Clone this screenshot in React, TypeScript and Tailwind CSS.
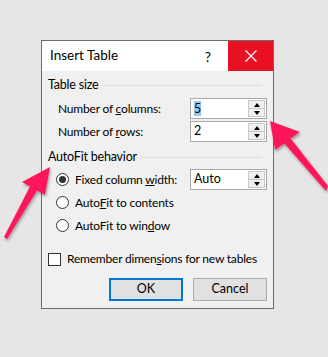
import React from "react";

const font = { fontFamily: 'Lato, "Noto Sans", Arial, sans-serif' };

function Spin() {
  return (
    <div className="absolute right-[1px] top-[1px] bottom-[1px] w-[17px] flex flex-col border border-[#c8c8c8] bg-[#f0f0f0]">
      <div className="flex-1 flex items-center justify-center border-b border-[#c8c8c8]">
        <div className="w-0 h-0 border-l-[3.5px] border-r-[3.5px] border-b-[4px] border-l-transparent border-r-transparent border-b-black" />
      </div>
      <div className="flex-1 flex items-center justify-center">
        <div className="w-0 h-0 border-l-[3.5px] border-r-[3.5px] border-t-[4px] border-l-transparent border-r-transparent border-t-black" />
      </div>
    </div>
  );
}

function SpinInput({ children }: { children: React.ReactNode }) {
  return (
    <div className="relative w-[77px] h-[21px] border border-[#a8a8a8] bg-white flex items-center pl-[3px] text-[12.5px] text-black">
      {children}
      <Spin />
    </div>
  );
}

function Radio({ checked }: { checked?: boolean }) {
  return (
    <div className="w-[13px] h-[13px] rounded-full border border-[#333] bg-white flex items-center justify-center shrink-0">
      {checked && <div className="w-[7px] h-[7px] rounded-full bg-[#333]" />}
    </div>
  );
}

function GroupHeader({ label }: { label: string }) {
  return (
    <div className="flex items-center h-[14px] text-[12.5px] tracking-[-0.2px] text-black whitespace-nowrap">
      <span>{label}</span>
      <div className="flex-1 h-px bg-[#dcdcdc] ml-[5px] mr-[5px]" />
    </div>
  );
}

const txt = "text-[12px] tracking-[-0.2px] text-black";

export default function App() {
  return (
    <div className="relative w-[328px] h-[357px] bg-[#e6e6e6] overflow-hidden" style={font}>
      <div className="pt-[40px] pl-[41px]">
        <div className="w-[233px] h-[269px] border border-[#6d6d6d] bg-[#f0f0f0] flex flex-col">
          <div className="h-[30px] bg-white flex items-center">
            <span className="ml-[8px] text-[13.5px] text-black leading-none flex-1">Insert Table</span>
            <span className="w-[40px] text-center text-[14px] text-black">?</span>
            <div className="w-[45px] h-[30px] bg-[#e81123] flex items-center justify-center">
              <svg width="12" height="12" viewBox="0 0 12 12">
                <path d="M0.5 0.5 L11.5 11.5 M11.5 0.5 L0.5 11.5" stroke="white" strokeWidth="1.2" />
              </svg>
            </div>
          </div>
          <div className="flex flex-col pl-[6px] pr-[6px] whitespace-nowrap">
            <div className="mt-[7px]">
              <GroupHeader label="Table size" />
            </div>
            <div className="mt-[6px] flex items-center justify-between h-[21px]">
              <span className={`ml-[10px] ${txt}`}>
                Number of <u>c</u>olumns:
              </span>
              <SpinInput>
                <span className="bg-[#99c9ef] leading-[15px]">5</span>
              </SpinInput>
            </div>
            <div className="mt-[2px] flex items-center justify-between h-[21px]">
              <span className={`ml-[10px] ${txt}`}>
                Number of <u>r</u>ows:
              </span>
              <SpinInput>2</SpinInput>
            </div>
            <div className="mt-[8px]">
              <GroupHeader label="AutoFit behavior" />
            </div>
            <div className="mt-[4px] flex items-center justify-between h-[23px]">
              <div className={`flex items-center ml-[8px] gap-[6px] ${txt}`}>
                <Radio checked />
                <span>
                  Fixed column <u>w</u>idth:
                </span>
              </div>
              <SpinInput>Auto</SpinInput>
            </div>
            <div className={`flex items-center h-[23px] ml-[8px] gap-[6px] ${txt}`}>
              <Radio />
              <span>
                Auto<u>F</u>it to contents
              </span>
            </div>
            <div className={`flex items-center h-[23px] ml-[8px] gap-[6px] ${txt}`}>
              <Radio />
              <span>
                AutoFit to win<u>d</u>ow
              </span>
            </div>
            <div className={`mt-[15px] flex items-center h-[14px] gap-[6px] ${txt}`}>
              <div className="w-[13px] h-[13px] border border-[#333] bg-white shrink-0" />
              <span>
                Remember dimen<u>s</u>ions for new tables
              </span>
            </div>
            <div className="mt-[12px] flex justify-end gap-[10px]">
              <div className="w-[74px] h-[23px] border-2 border-[#0078d7] bg-[#e1e1e1] flex items-center justify-center text-[12.5px] text-black">
                OK
              </div>
              <div className="w-[74px] h-[23px] border border-[#adadad] bg-[#e1e1e1] flex items-center justify-center text-[12.5px] text-black">
                Cancel
              </div>
            </div>
          </div>
        </div>
      </div>
      <svg className="absolute left-0 top-0 pointer-events-none" width="328" height="357" viewBox="0 0 328 357">
        <defs>
          <filter id="sh" x="-20%" y="-20%" width="140%" height="140%">
            <feDropShadow dx="1" dy="2" stdDeviation="1.5" floodColor="#000" floodOpacity="0.35" />
          </filter>
        </defs>
        <polygon
          points="50,167 45,195 37,190.6 7,239 4,237 30,186.4 22,182"
          fill="#fe175a"
          filter="url(#sh)"
        />
        <polygon
          points="270,121 300,132 290.6,138.4 328,186 326,191 284.4,143.6 275,150"
          fill="#fe175a"
          filter="url(#sh)"
        />
      </svg>
    </div>
  );
}
